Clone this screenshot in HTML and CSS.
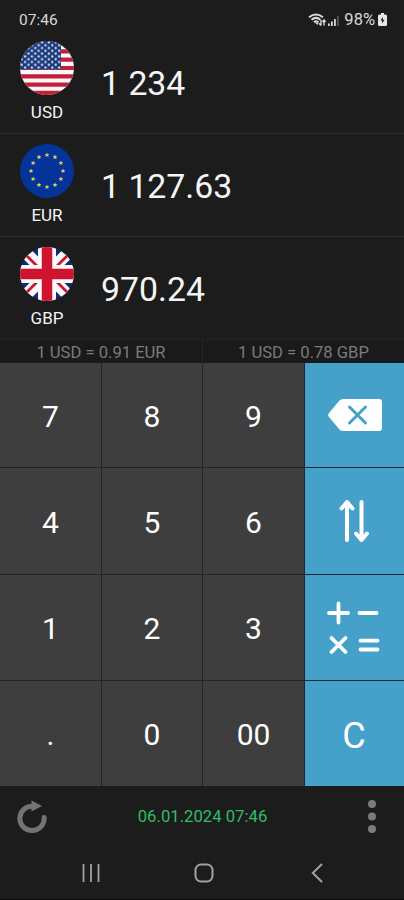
FILE: index.html
```html
<!DOCTYPE html>
<html lang="en">
<head>
<meta charset="utf-8">
<title>Currency converter</title>
<link rel="stylesheet" href="styles.css">
</head>
<body>
<div class="screen">
  <header class="status">
    <span class="clock">07:46</span>
    <span class="indicators">
      <svg class="wifi" viewBox="0 0 34 16" width="34" height="16">
        <g fill="none" stroke="#d6d6d6" stroke-width="2">
          <path d="M1 5.200Q8 0 15 5.200"/>
          <path d="M3.500 7.800Q8 4 12.500 7.800"/>
          <path d="M6 10.300Q8 8.200 10.400 10.300"/>
        </g>
        <path d="M6.500 10.500h4L9.500 13z" fill="#d6d6d6"/>
        <path d="M13 13.500V8M11 11.300l2 2.200M16 8v5.500M14.500 10L16 8l1.500 2" stroke="#d6d6d6" stroke-width="1.400" fill="none"/>
        <path d="M20 11.500h1.800v2.500H20zM23 9.500h1.800v4.500H23zM26 7h1.800v7H26z" fill="#d6d6d6"/>
        <path d="M29 4h1.800v10H29z" fill="#555"/>
      </svg>
      <span class="percent">98%</span>
      <svg class="battery" viewBox="0 0 9 13" width="9" height="13">
        <path d="M3 0h3v1.500h1.500Q9 1.500 9 3v8.500Q9 13 7.500 13h-6Q0 13 0 11.500V3Q0 1.500 1.500 1.500H3z" fill="#e6e6e6"/>
        <path d="M5 4L2.500 7.600h1.600L4 10.500l2.600-3.800H4.900z" fill="#1c1c1c"/>
      </svg>
    </span>
  </header>

  <main>
    <section class="currency">
      <div class="unit">
        <svg viewBox="0 0 54 54" width="54" height="54">
          <defs>
            <clipPath id="disc"><circle cx="27" cy="27" r="27"/></clipPath>
            <pattern id="stars" width="6.800" height="5.600" patternUnits="userSpaceOnUse">
              <circle cx="1.700" cy="1.400" r="1.150" fill="#dfe6f5"/>
              <circle cx="5.100" cy="4.200" r="1.150" fill="#dfe6f5"/>
            </pattern>
          </defs>
          <g clip-path="url(#disc)">
            <path fill="#f8f8f8" d="M0 0h54v54H0z"/>
            <path stroke="#c41e3a" stroke-width="4.150" d="M0 2.080h54M0 10.380h54M0 18.690h54M0 27h54M0 35.310h54M0 43.620h54M0 51.920h54"/>
            <path fill="#193b7d" d="M0 0h41v28.500H0z"/>
            <path fill="url(#stars)" d="M0 0h41v28.500H0z"/>
          </g>
        </svg>
        <span>USD</span>
      </div>
      <output>1 234</output>
    </section>
    <section class="currency">
      <div class="unit">
        <svg viewBox="-27 -27 54 54" width="54" height="54">
          <defs><path id="star" fill="#e8cd62" d="M0-2.500L.7-.8 2.400-.8 1.100.4 1.500 2.100 0 1.100-1.500 2.100-1.100.4-2.400-.8-.7-.8z"/></defs>
          <circle r="27" fill="#043399"/>
          <use href="#star" x="0" y="-16"/><use href="#star" x="8" y="-13.900"/>
          <use href="#star" x="13.900" y="-8"/><use href="#star" x="16" y="0"/>
          <use href="#star" x="13.900" y="8"/><use href="#star" x="8" y="13.900"/>
          <use href="#star" x="0" y="16"/><use href="#star" x="-8" y="13.900"/>
          <use href="#star" x="-13.900" y="8"/><use href="#star" x="-16" y="0"/>
          <use href="#star" x="-13.900" y="-8"/><use href="#star" x="-8" y="-13.900"/>
        </svg>
        <span>EUR</span>
      </div>
      <output>1 127.63</output>
    </section>
    <section class="currency">
      <div class="unit">
        <svg viewBox="0 0 54 54" width="54" height="54">
          <g clip-path="url(#disc)">
            <path fill="#152a76" d="M0 0h54v54H0z"/>
            <path stroke="#fafafa" stroke-width="12" d="M0 0l54 54M54 0L0 54"/>
            <path stroke="#d0142f" stroke-width="2.800" d="M3 5l20 20M51 5L31 25M3 49l20-20M51 49L31 29"/>
            <path stroke="#fafafa" stroke-width="18" d="M27 0v54M0 27h54"/>
            <path stroke="#d0142f" stroke-width="10.500" d="M27 0v54M0 27h54"/>
          </g>
        </svg>
        <span>GBP</span>
      </div>
      <output>970.24</output>
    </section>

    <div class="rates"><span>1 USD = 0.91 EUR</span><span>1 USD = 0.78 GBP</span></div>

    <div class="keypad">
      <button>7</button><button>8</button><button>9</button>
      <button class="action delete" aria-label="Delete">
        <svg viewBox="0 0 54 34" width="54" height="34">
          <path fill="#fff" d="M15 1h36q3 0 3 3v26q0 3-3 3H15q-2 0-3.500-1.600L1 19q-1.700-2 0-4L11.500 2.600Q13 1 15 1z"/>
          <path stroke="#45a0ca" stroke-width="3" stroke-linecap="round" d="M21.500 9l16 16M37.500 9l-16 16"/>
        </svg>
      </button>
      <button>4</button><button>5</button><button>6</button>
      <button class="action" aria-label="Swap">
        <svg viewBox="0 0 32 44" width="32" height="44" fill="none" stroke="#fff" stroke-width="4" stroke-linecap="round" stroke-linejoin="round">
          <path d="M9 41V3M3.500 9.500L9 3l5.500 6.500M23.500 3v38M18 34.500l5.500 6.500 5.500-6.500"/>
        </svg>
      </button>
      <button>1</button><button>2</button><button>3</button>
      <button class="action" aria-label="Calculator">
        <svg viewBox="0 0 54 54" width="54" height="54" fill="none" stroke="#fff" stroke-width="3.800" stroke-linecap="round">
          <path d="M11.500 2.500v19M2 12h19M32.500 12h17M4.500 37l14 14M18.500 37l-14 14M33.500 39.700h17M33.500 48.500h17"/>
        </svg>
      </button>
      <button>.</button><button>0</button><button>00</button>
      <button class="action clear">C</button>
    </div>
  </main>

  <footer class="toolbar">
    <svg viewBox="0 0 32 34" width="32" height="34">
      <path d="M17 6.200A12.200 12.200 0 1 0 28.200 17.500" fill="none" stroke="#737373" stroke-width="5" stroke-linecap="round"/>
      <path d="M15.500 .5L26 6l-10.500 5.600z" fill="#737373"/>
    </svg>
    <time>06.01.2024 07:46</time>
    <svg viewBox="0 0 8 34" width="8" height="34" fill="#7b7b7b">
      <circle cx="4" cy="4" r="4"/><circle cx="4" cy="16.500" r="4"/><circle cx="4" cy="29" r="4"/>
    </svg>
  </footer>
  <nav class="system">
    <svg viewBox="0 0 18 20" width="18" height="20"><path d="M1.500 1v18M9 1v18M16.500 1v18" stroke="#a2a2a2" stroke-width="1.800"/></svg>
    <svg viewBox="0 0 20 20" width="20" height="20"><rect x="1.500" y="1.500" width="17" height="17" rx="5.500" fill="none" stroke="#a2a2a2" stroke-width="2"/></svg>
    <svg viewBox="0 0 12 20" width="12" height="20"><path d="M11 1L1.800 10 11 19" fill="none" stroke="#a2a2a2" stroke-width="2"/></svg>
  </nav>
</div>
</body>
</html>
```
FILE: styles.css
```css
* {
  box-sizing: border-box;
}

body {
  margin: 0;
  background: #1c1c1c;
  color: #f5f5f5;
  font-family: Roboto, "Liberation Sans", sans-serif;
}

svg {
  display: block;
}

.screen {
  display: flex;
  flex-direction: column;
  width: 404px;
  height: 900px;
  overflow: hidden;
  border-bottom: 1px solid #0c0c0c;
}

.status {
  display: flex;
  justify-content: space-between;
  height: 30px;
  padding: 10px 17px 0 19px;
  color: #d8d8d8;
  font-size: 15.5px;
  line-height: 20px;
}

.indicators {
  display: flex;
  align-items: center;
  height: 20px;
}

.wifi {
  margin-right: 2px;
}

.percent {
  font-size: 16.5px;
  margin-right: 3px;
}

.battery {
  margin-bottom: 2px;
}

.currency {
  display: flex;
  height: 103px;
  padding: 11px 0 0 16px;
}

.currency + .currency {
  border-top: 1px solid #2b2b2b;
  padding-top: 10px;
}

.unit {
  display: flex;
  flex-direction: column;
  align-items: center;
  width: 62px;
  font-size: 17px;
  line-height: 20px;
}

.unit span {
  margin-top: 7px;
}

.currency output {
  margin: 23px 0 0 23px;
  font-size: 33.800px;
  line-height: 40px;
}

.rates {
  display: grid;
  grid-template-columns: 1fr 1fr;
  height: 24px;
  border-top: 1px solid #222;
  background: #1a1a1a;
  color: #7b7b7b;
  font-size: 16.600px;
  line-height: 25px;
  text-align: center;
}

.rates span + span {
  border-left: 1px solid #262626;
}

.keypad {
  display: grid;
  grid-template-columns: 101px 100px 101px 99px;
  grid-template-rows: 104px 106px 105px 105px;
  gap: 1px;
  height: 423px;
  background: #242424;
}

.keypad button {
  display: flex;
  align-items: center;
  justify-content: center;
  padding: 3px 0 0;
  border: 0;
  background: #3e3e3e;
  color: #fff;
  font: 30px/36px Roboto, "Liberation Sans", sans-serif;
}

.keypad .action {
  padding: 0 2px 0 0;
  background: #45a0ca;
}

.keypad .delete {
  padding-right: 0;
}

.keypad .clear {
  padding: 5px 1px 0 0;
  font-size: 36px;
}

.toolbar {
  display: grid;
  grid-template-columns: 32px 1fr 8px;
  align-items: center;
  height: 61px;
  padding: 1px 28px 0 16px;
}

.toolbar time {
  padding-right: 11px;
  color: #2fbe62;
  font-size: 16.700px;
  line-height: 20px;
  text-align: center;
}

.system {
  display: grid;
  grid-template-columns: 112px 117px 12px;
  padding: 16px 0 0 82px;
}
```
